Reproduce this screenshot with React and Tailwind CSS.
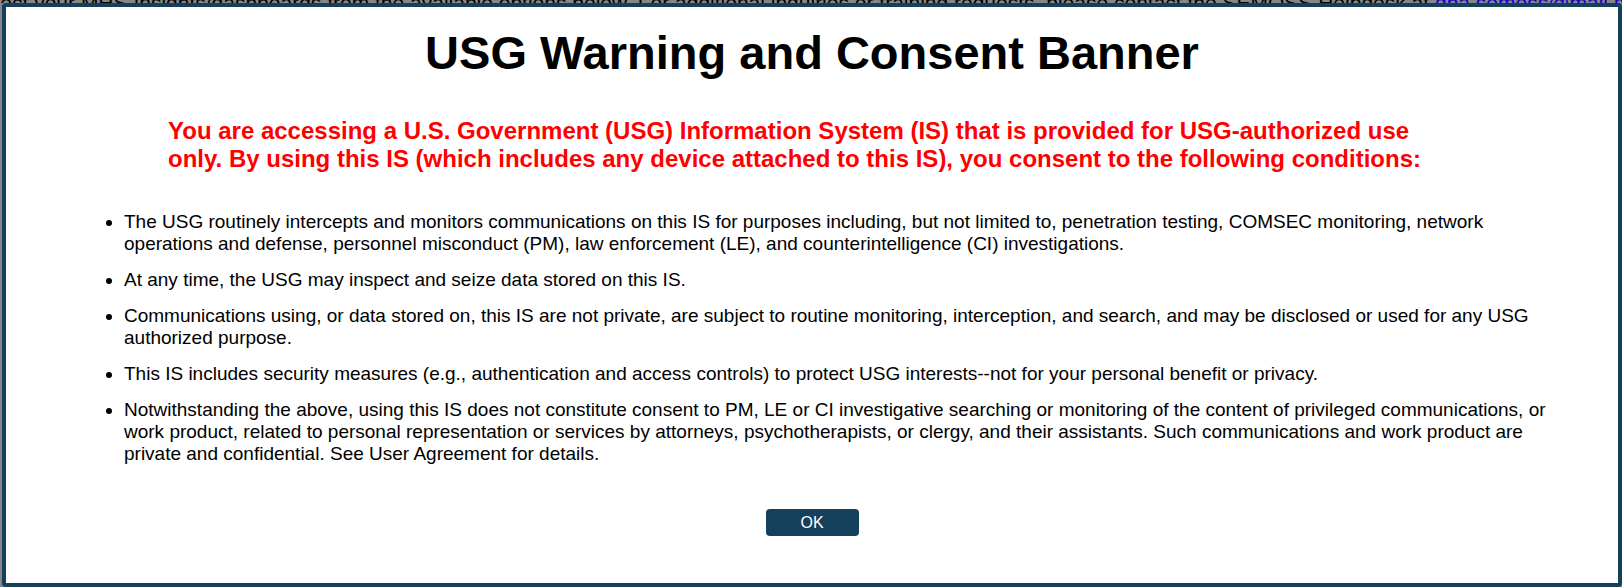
const conditions = [
  'The USG routinely intercepts and monitors communications on this IS for purposes including, but not limited to, penetration testing, COMSEC monitoring, network operations and defense, personnel misconduct (PM), law enforcement (LE), and counterintelligence (CI) investigations.',
  'At any time, the USG may inspect and seize data stored on this IS.',
  'Communications using, or data stored on, this IS are not private, are subject to routine monitoring, interception, and search, and may be disclosed or used for any USG authorized purpose.',
  'This IS includes security measures (e.g., authentication and access controls) to protect USG interests--not for your personal benefit or privacy.',
  'Notwithstanding the above, using this IS does not constitute consent to PM, LE or CI investigative searching or monitoring of the content of privileged communications, or work product, related to personal representation or services by attorneys, psychotherapists, or clergy, and their assistants. Such communications and work product are private and confidential. See User Agreement for details.',
];

export default function App() {
  return (
    <div className="flex min-h-screen flex-col overflow-hidden bg-[#868686] font-['Liberation_Sans',Arial,sans-serif] text-black">
      <div className="flex h-[3px] items-end overflow-hidden">
        <p className="-mb-3 -ml-4 shrink-0 whitespace-nowrap text-[21px] leading-6">
          elect your MHS Insights/dashboards from the available options below. For additional inquiries or training requests, please contact the SEMOSS Helpdesk at{' '}
          <a href="mailto:dha.semoss@mail.mil" className="text-[#1000c8] underline">dha.semoss@mail.mil</a>
        </p>
      </div>
      <main
        role="dialog"
        aria-labelledby="banner-title"
        className="ml-0.5 flex grow flex-col items-center rounded-sm border-4 border-[#15405b] bg-white px-14 pt-[18px] pb-10"
      >
        <h1 id="banner-title" className="text-center text-[47px] leading-[56px] font-bold">
          USG Warning and Consent Banner
        </h1>
        <h2 className="mt-9 w-full px-[106px] text-2xl leading-7 font-bold text-[#ff0000]">
          You are accessing a U.S. Government (USG) Information System (IS) that is provided for USG-authorized use only. By using this IS (which includes any device attached to this IS), you consent to the following conditions:
        </h2>
        <ul className="mt-[38px] flex w-full list-disc flex-col gap-3.5 pl-[62px] text-[19px] leading-[22px]">
          {conditions.map((text) => (
            <li key={text}>{text}</li>
          ))}
        </ul>
        <button
          type="button"
          className="mt-11 h-[27px] w-[93px] rounded-sm bg-[#15405b] text-base leading-[27px] text-white"
        >
          OK
        </button>
      </main>
    </div>
  );
}
